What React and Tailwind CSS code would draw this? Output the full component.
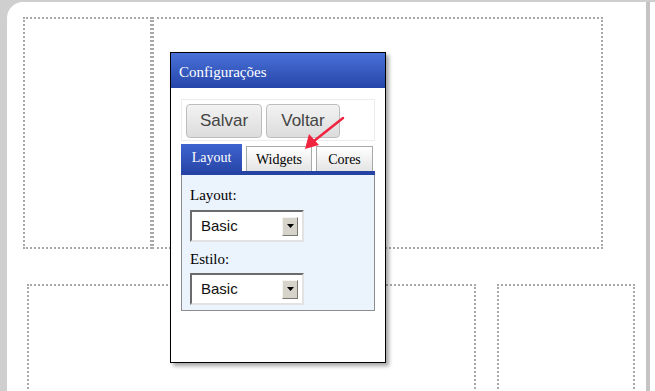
import React from 'react'

const serif = { fontFamily: '"Liberation Serif", "Times New Roman", serif' }
const sans = { fontFamily: '"Liberation Sans", Arial, sans-serif' }

function DottedBox({ className }) {
  return <div className={`border-2 border-dotted border-[#a8a8a8] ${className}`} />
}

function Select({ value }) {
  return (
    <div className="flex h-[32px] w-[114px] items-center justify-between border-2 border-t-[#6b6b6b] border-l-[#6b6b6b] border-b-[#e2e2e2] border-r-[#e2e2e2] bg-white pl-[9px] pr-[4px]">
      <span className="text-[15px] text-[#111]" style={sans}>{value}</span>
      <span className="flex h-[19px] w-[16px] items-center justify-center border border-t-[#f4f3ef] border-l-[#f4f3ef] border-b-[#7a7770] border-r-[#7a7770] bg-[#d6d3cb]">
        <svg width="7" height="4" viewBox="0 0 7 4">
          <path d="M0 0h7L3.5 4z" fill="#000" />
        </svg>
      </span>
    </div>
  )
}

function ToolButton({ children, width }) {
  return (
    <button
      className={`flex h-[34px] ${width} items-center justify-center rounded-[4px] border border-[#bdbdbd] bg-gradient-to-b from-[#f3f3f3] to-[#dcdcdc] text-[17px] text-[#444]`}
      style={sans}
    >
      {children}
    </button>
  )
}

function Dialog() {
  return (
    <div className="absolute left-[170px] top-[52px] flex h-[311px] w-[216px] flex-col border border-black bg-white shadow-[3px_3px_4px_rgba(0,0,0,0.35)]">
      <div
        className="flex h-[35px] items-center bg-gradient-to-b from-[#4a71d8] to-[#2645a9] pl-[8px] pt-[4px] text-[15px] text-white"
        style={serif}
      >
        Configurações
      </div>
      <div className="pl-[10px] pt-[11px]">
        <div className="flex h-[42px] w-[194px] items-start gap-[4px] border border-[#ececec] pl-[4px] pt-[4px]">
          <ToolButton width="w-[76px]">Salvar</ToolButton>
          <ToolButton width="w-[74px]">Voltar</ToolButton>
        </div>
        <div className="mt-[3px] flex h-[27px] w-[194px] items-end gap-[4px]" style={serif}>
          <div className="flex h-[27px] w-[61px] items-center justify-center bg-gradient-to-b from-[#3f64cf] to-[#2847aa] text-[14px] text-white">
            Layout
          </div>
          <div className="flex h-[25px] w-[66px] items-center justify-center border border-b-0 border-[#a9a9a9] bg-gradient-to-b from-white to-[#e4e4e4] text-[14px] text-black">
            Widgets
          </div>
          <div className="flex h-[25px] w-[57px] items-center justify-center border border-b-0 border-[#a9a9a9] bg-gradient-to-b from-white to-[#e4e4e4] text-[14px] text-black">
            Cores
          </div>
        </div>
        <div className="h-[4px] w-[194px] bg-[#2443a3]" />
        <div className="flex h-[136px] w-[194px] flex-col border border-t-0 border-[#8c8c8c] bg-[#ebf3fd] pl-[8px] pt-[12px]" style={serif}>
          <div className="text-[15px] leading-[17px] text-black">Layout:</div>
          <div className="mt-[6px]">
            <Select value="Basic" />
          </div>
          <div className="mt-[9px] text-[15px] leading-[17px] text-black">Estilo:</div>
          <div className="mt-[5px]">
            <Select value="Basic" />
          </div>
        </div>
      </div>
    </div>
  )
}

export default function App() {
  return (
    <div className="relative flex h-[391px] w-[655px] overflow-hidden bg-[#cfcfcf] pl-[7px] pt-[2px]">
      <div className="h-[389px] w-[639px] rounded-tl-[16px] bg-white pl-[16px] pt-[15px]">
        <div className="flex">
          <DottedBox className="h-[232px] w-[129px]" />
          <DottedBox className="h-[232px] w-[451px]" />
        </div>
        <div className="ml-[4px] mt-[35px] flex gap-[21px]">
          <DottedBox className="h-[140px] w-[449px]" />
          <DottedBox className="h-[140px] w-[138px]" />
        </div>
      </div>
      <div className="h-[389px] w-[4px] bg-[#c4c4c4]" />
      <div className="h-[389px] w-[5px] bg-white" />
      <Dialog />
      <svg className="absolute left-0 top-0" width="655" height="391" viewBox="0 0 655 391">
        <line x1="343" y1="118" x2="314" y2="141" stroke="#f0243f" strokeWidth="2.5" strokeLinecap="round" />
        <path d="M305 149 L309 134 L319 145 Z" fill="#f0243f" />
      </svg>
    </div>
  )
}
